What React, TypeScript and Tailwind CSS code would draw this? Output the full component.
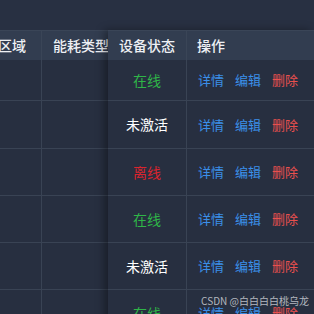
import React from "react";

const rows = [
  { status: "在线", color: "text-[#2fb548]", h: "h-[41px]" },
  { status: "未激活", color: "text-white", h: "h-[48px]" },
  { status: "离线", color: "text-[#d9242e]", h: "h-[47px]" },
  { status: "在线", color: "text-[#2fb548]", h: "h-[47px]" },
  { status: "未激活", color: "text-white", h: "h-[47px]" },
  { status: "在线", color: "text-[#2fb548]", h: "h-[47px]" },
];

export default function App() {
  return (
    <div
      className="relative w-[314px] h-[314px] overflow-hidden bg-[#283042]"
      style={{ fontFamily: '"Noto Sans CJK SC", "Noto Sans", sans-serif' }}
    >
      <div className="h-[30px] bg-[#283042]" />
      <div className="flex">
        {/* scrollable part */}
        <div className="w-[108px] overflow-hidden shrink-0">
          <div className="ml-[-13px] w-[200px]">
            <div className="flex h-[30px] bg-[#323d50] border-t border-[#3a4557] text-[14px] font-medium text-[#eef0f4]">
              <div className="w-[55px] shrink-0 border-r border-[#3a4557] pl-[11px] flex items-center">区域</div>
              <div className="w-[100px] shrink-0 pl-[11px] flex items-center whitespace-nowrap">能耗类型</div>
            </div>
            {rows.map((r, i) => (
              <div key={i} className={`flex ${r.h} bg-[#272f40] border-b border-[#394354]`}>
                <div className="w-[55px] shrink-0 border-r border-[#394354]" />
                <div className="w-[100px] shrink-0" />
              </div>
            ))}
          </div>
        </div>
        {/* fixed right part */}
        <div className="flex-1 relative z-10 shadow-[-4px_0_8px_rgba(0,0,0,0.35)]">
          <div className="flex h-[30px] bg-[#323d50] border-t border-[#3a4557] text-[14px] font-medium text-[#eef0f4]">
            <div className="w-[79px] shrink-0 border-r border-[#3a4557] pl-[11px] flex items-center whitespace-nowrap">设备状态</div>
            <div className="flex-1 pl-[10px] flex items-center">操作</div>
          </div>
          {rows.map((r, i) => (
            <div key={i} className={`flex ${r.h} bg-[#272f40] border-b border-[#394354]`}>
              <div className={`w-[79px] shrink-0 border-r border-[#394354] flex items-center justify-center text-[14px] ${r.color}`}>
                {r.status}
              </div>
              <div className="flex-1 flex items-center pl-[11px] gap-[11px] text-[13px]">
                <span className="text-[#3b8fe9]">详情</span>
                <span className="text-[#3b8fe9]">编辑</span>
                <span className="text-[#e9504e]">删除</span>
              </div>
            </div>
          ))}
        </div>
      </div>
      <div className="absolute right-[5px] bottom-[7px] z-20 text-[10px] leading-[12px] text-[#b3b7bf] whitespace-nowrap">
        CSDN @白白白白桃乌龙
      </div>
    </div>
  );
}
